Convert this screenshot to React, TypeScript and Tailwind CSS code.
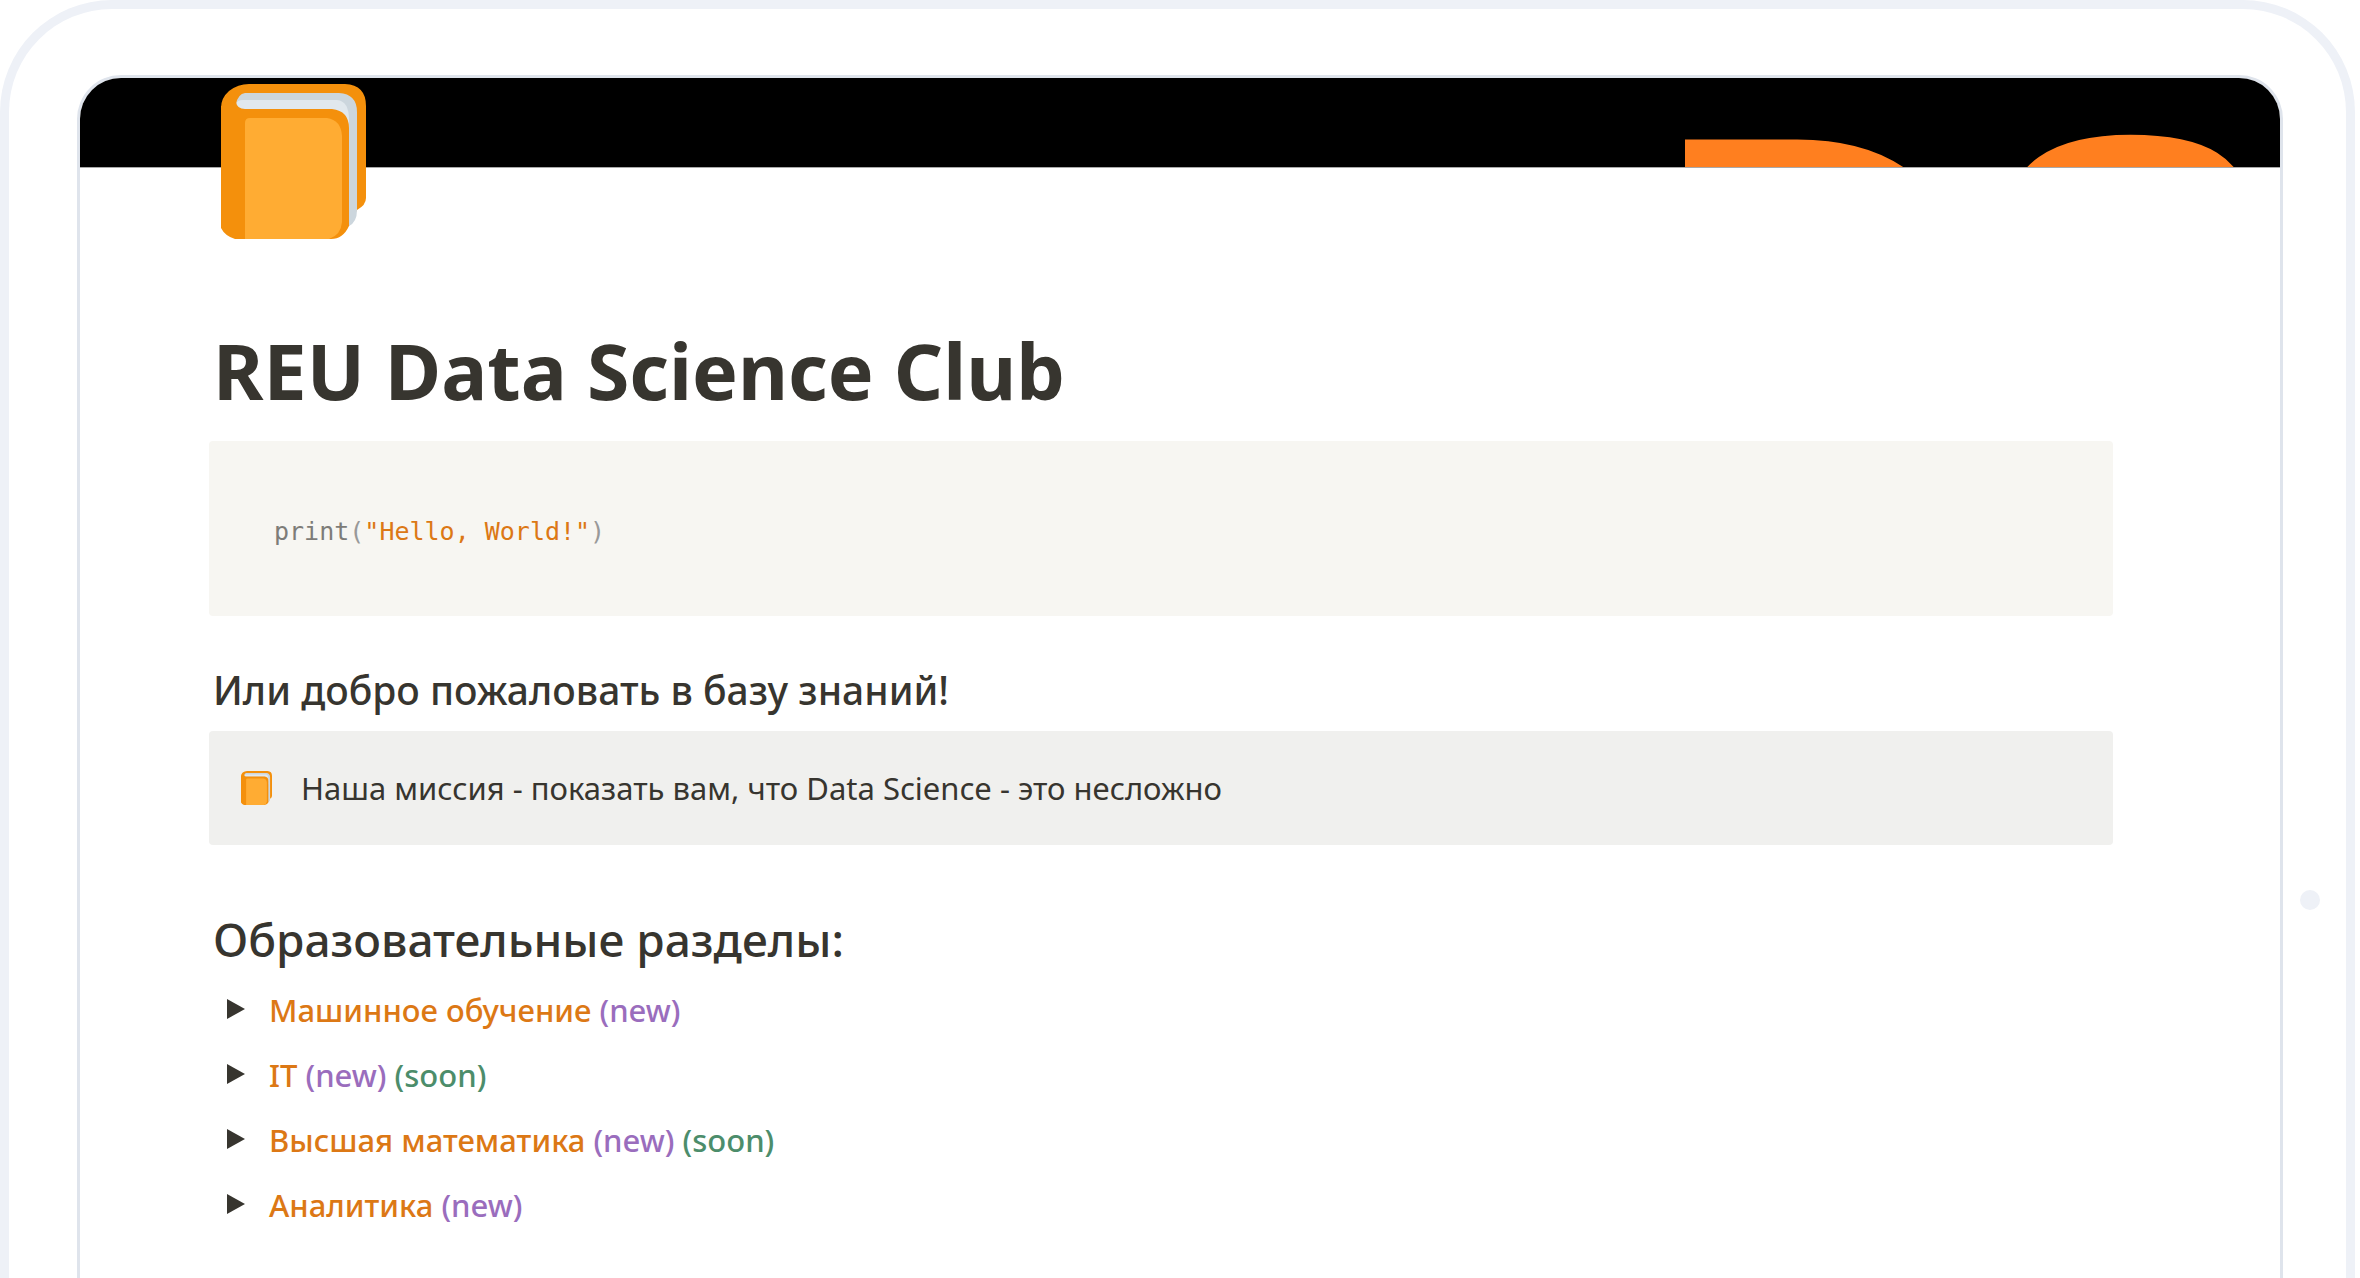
type Tag = "new" | "soon";

const sections: { title: string; tags: Tag[] }[] = [
  { title: "Машинное обучение", tags: ["new"] },
  { title: "IT", tags: ["new", "soon"] },
  { title: "Высшая математика", tags: ["new", "soon"] },
  { title: "Аналитика", tags: ["new"] },
];

const tagColor: Record<Tag, string> = {
  new: "text-[#9a6dbd]",
  soon: "text-[#4c8d6b]",
};

function Book({ className }: { className: string }) {
  return (
    <svg viewBox="0 0 145 155" preserveAspectRatio="none" className={className} aria-hidden="true">
      <path fill="#F4900C" d="M0 24Q0 14 8 7Q17 0 28 0H124Q145 1 145 22V114Q145 121 136 126L128 142L60 60H0Z" />
      <path fill="#CCD6DD" d="M24 9H118Q136 10 136 28V126Q136 138 128 142L115 120V40H24Q15 30 15 20Q17 10 24 9Z" />
      <path fill="#E1E8ED" d="M22 16H116Q128 17 128 36V60H110V26H24Q15 24 15 20Q16 16 22 16Z" />
      <path fill="#F4900C" d="M0 22L15 18Q16 25 24 25H111Q128 27 128 44V142Q122 155 110 155H14Q4 152 0 144Z" />
      <path fill="#FFAC33" d="M24 39Q24 34 29 34H106Q120 36 121 52V138Q120 151 108 155H24Z" />
    </svg>
  );
}

function Cover() {
  return (
    <div className="relative h-[90px] overflow-hidden border-b border-[#a9a9a9] bg-black">
      <span
        aria-hidden="true"
        className="absolute -top-2.5 right-0 font-['Liberation_Sans',sans-serif] text-[450px] leading-none font-bold text-[#ff7f1f]"
      >
        DS
      </span>
    </div>
  );
}

export default function App() {
  return (
    <div className="flex min-h-screen bg-white pr-[5px] font-['Noto_Sans',sans-serif] text-[#37352f]">
      <div className="relative flex flex-1 rounded-t-[112px] border-[9px] border-b-0 border-[#eef1f7] bg-white pt-[66px] pr-[63px] pl-[68px]">
        <main className="flex-1 overflow-hidden rounded-t-[44px] border-[3px] border-b-0 border-[#dfe4ec] bg-white">
          <Cover />
          <div className="pr-[167px] pb-10 pl-[129px]">
            <Book className="relative -mt-[84px] ml-3 h-[155px] w-[145px]" />
            <h1 className="mt-[84px] pl-1 text-[77px] leading-[96px] font-bold">REU Data Science Club</h1>

            <pre className="mt-[22px] rounded bg-[#f7f6f2] px-[65px] pt-[73px] pb-[67px] font-['DejaVu_Sans_Mono',monospace] text-[25px] leading-[35px] text-[#999999]">
              <code className="font-['DejaVu_Sans_Mono',monospace]">
                <span className="text-[#7d7c78]">print</span>(
                <span className="text-[#dc7815]">"Hello, World!"</span>)
              </code>
            </pre>

            <h3 className="mt-[50px] pl-1 text-[39px] leading-[48px] font-medium">
              Или добро пожаловать в базу знаний!
            </h3>
            <div className="mt-[17px] flex items-center gap-[29px] rounded bg-[#f0f0ee] py-[33px] pl-8">
              <Book className="h-[34px] w-[31px]" />
              <p className="text-[31px] leading-[48px]">
                Наша миссия - показать вам, что Data Science - это несложно
              </p>
            </div>

            <h2 className="mt-16 pl-1 text-[46px] leading-[60px] font-medium">Образовательные разделы:</h2>
            <ul className="mt-[9px]">
              {sections.map(({ title, tags }) => (
                <li key={title}>
                  <button
                    type="button"
                    aria-expanded="false"
                    className="flex h-[65px] items-center gap-6 pl-[18px] text-[31px] font-medium"
                  >
                    <svg viewBox="0 0 18 20" className="mb-1 h-5 w-[18px] fill-[#37352f]" aria-hidden="true">
                      <path d="M0 0L18 10L0 20Z" />
                    </svg>
                    <span className="text-[#dc7815]">
                      {title}
                      {tags.map((tag) => (
                        <span key={tag} className={tagColor[tag]}>
                          {" "}
                          ({tag})
                        </span>
                      ))}
                    </span>
                  </button>
                </li>
              ))}
            </ul>
          </div>
        </main>
        <span className="absolute top-[881px] right-[26px] size-5 rounded-full bg-[#eef1f7]" />
      </div>
    </div>
  );
}
